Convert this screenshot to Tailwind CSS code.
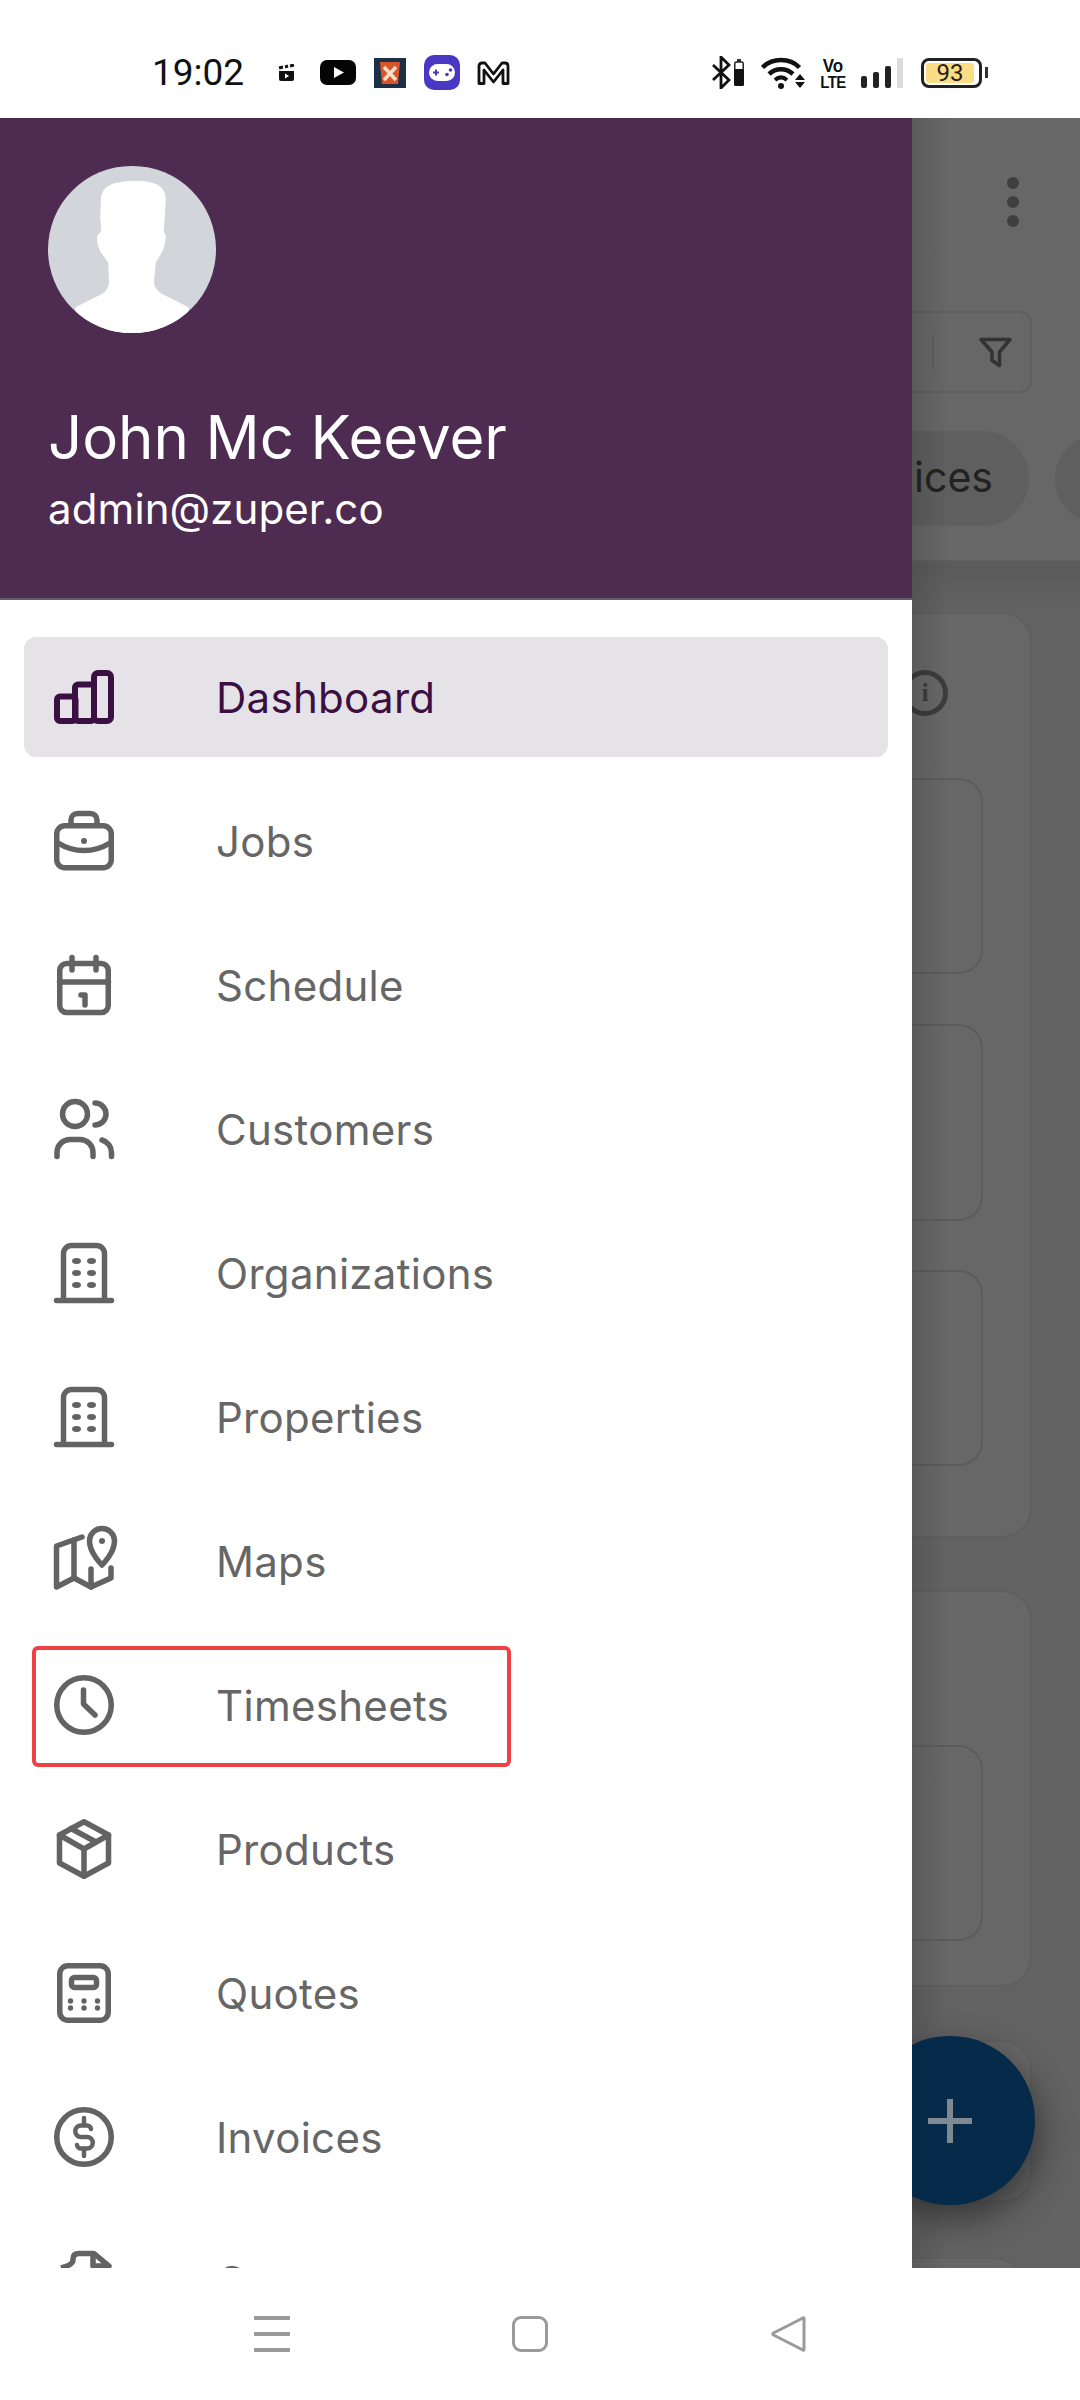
<!DOCTYPE html>
<html lang="en">
<head>
<meta charset="utf-8">
<title>Zuper drawer</title>
<script src="https://cdn.jsdelivr.net/npm/@tailwindcss/browser@4"></script>
</head>
<body class="m-0 bg-white">
<div class="w-[1080px] h-[2400px] flex flex-col overflow-hidden bg-white font-['Inter','Liberation_Sans',sans-serif]">

  <!-- status bar -->
  <div class="h-[118px] shrink-0 bg-white flex items-center justify-between pl-[152px] pr-[92px] pt-[27px] text-[#111]">
    <div class="flex items-center">
      <span class="font-['Roboto',sans-serif] text-[37px] leading-[36px] w-[126px]">19:02</span>
      <svg class="w-[17px] h-[17px]" viewBox="0 0 17 17"><path d="M1 7h15v8a2 2 0 0 1-2 2H3a2 2 0 0 1-2-2z" fill="#111"/><path d="M1 4l4-1M7 3l3-1M12 2l4-1" stroke="#111" stroke-width="3"/><path d="M7 9.500l4 2.500-4 2.500z" fill="#fff"/></svg>
      <svg class="w-[36px] h-[25px] ml-[25px]" viewBox="0 0 36 25"><rect width="36" height="25" rx="7" fill="#050505"/><path d="M14 7l10 5.500L14 18z" fill="#fff"/></svg>
      <svg class="w-[32px] h-[30px] ml-[18px]" viewBox="0 0 32 30"><rect width="32" height="30" fill="#1c3145"/><path d="M6 4h20l-2 22H8z" fill="#d9552b"/><path d="M10 9l12 13M22 9L10 22" stroke="#fbe0c8" stroke-width="3.500"/></svg>
      <svg class="w-[36px] h-[35px] ml-[18px]" viewBox="0 0 36 35"><rect width="36" height="35" rx="10" fill="#4a37c4"/><rect x="5" y="9" width="26" height="17" rx="8.500" fill="#fff"/><path d="M9 17.500h6M12 14.500v6" stroke="#4a37c4" stroke-width="2"/><circle cx="23" cy="19.500" r="1.800" fill="#4a37c4"/><circle cx="26.500" cy="15" r="1.800" fill="#4a37c4"/></svg>
      <svg class="w-[33px] h-[24px] ml-[17px]" viewBox="0 0 33 24" fill="none"><path d="M2 22.500V5q0-3 3-3h3l8.500 11L25 2h3q3 0 3 3v17.500h-5V9l-9.500 12L7 9v13.500z" stroke="#111" stroke-width="2.800" stroke-linejoin="round"/></svg>
    </div>
    <div class="flex items-center">
      <svg class="w-[19px] h-[33px]" viewBox="0 0 19 33" fill="none"><path d="M1 9l16 15-8 8V1l8 8L1 24" stroke="#111" stroke-width="2.800"/></svg>
      <svg class="w-[10px] h-[27px] ml-[3px]" viewBox="0 0 10 27"><rect x="3" y="0" width="4" height="3" fill="#333"/><rect x=".8" y="3" width="8.400" height="23" rx="1.500" fill="#fff" stroke="#222" stroke-width="1.500"/><rect y="10" width="10" height="17" rx="1.500" fill="#111"/></svg>
      <svg class="w-[46px] h-[32px] ml-[17px]" viewBox="0 0 46 32" fill="none"><path d="M1.500 10.500C11 .5 29 .5 38.500 10.500" stroke="#111" stroke-width="4.500"/><path d="M8 17c7-6.500 17-6.500 24 0" stroke="#111" stroke-width="4.500"/><path d="M14 23c4-3.500 8-3.500 12 0" stroke="#111" stroke-width="4"/><circle cx="20" cy="29" r="3" fill="#111"/><path d="M39 17l-5 6h10zM34 25h10l-5 6z" fill="#111"/></svg>
      <div class="ml-[15px] w-[22px] flex flex-col items-center font-['Liberation_Sans',sans-serif] font-bold text-[#111] leading-none">
        <span class="text-[17px] h-[17px] [transform:scaleY(1.1)]">Vo</span>
        <span class="text-[15px] h-[15px] tracking-[-0.5px] [transform:scaleY(1.1)]">LTE</span>
      </div>
      <div class="ml-[17px] h-[30px] flex items-end gap-[6px]">
        <div class="w-[6px] h-[12px] rounded-[2px] bg-[#222]"></div>
        <div class="w-[6px] h-[16px] rounded-[2px] bg-[#222]"></div>
        <div class="w-[6px] h-[22px] rounded-[2px] bg-[#222]"></div>
        <div class="w-[6px] h-[30px] bg-[#dcdcdc]"></div>
      </div>
      <div class="ml-[18px] flex items-center">
        <div class="w-[61px] h-[30px] rounded-[8px] border-[3px] border-[#222] p-[2px] flex">
          <div class="w-[48px] h-full rounded-[3px] bg-[#fbdd85] flex items-center justify-center text-[24px] leading-none text-[#222] font-['Roboto',sans-serif]">93</div>
        </div>
        <div class="w-[3px] h-[11px] ml-[3px] bg-[#333]"></div>
      </div>
    </div>
  </div>

  <!-- middle -->
  <div class="relative h-[2150px] shrink-0 flex overflow-hidden">
    <!-- drawer -->
    <div class="w-[912px] h-full shrink-0 bg-white flex flex-col overflow-hidden">
      <div class="h-[482px] shrink-0 bg-[#4e2b50] pl-[48px] pt-[48px] text-white border-b-[2px] border-[#5f5f66]">
        <div class="w-[168px] h-[167px] rounded-full overflow-hidden bg-[#d2d6da]">
          <svg class="w-full h-full" viewBox="0 0 168 168"><path d="M53 30Q56 18 73 16Q92 13 105 17Q117 20 118 33L117 51L116 66L118 71Q117 82 114 87L108 97L106 117Q107 124 113 128L141 142V168H27V142L55 128Q60 124 61 117L60 97L52 86Q48 78 49 70L53 66L52 51Z" fill="#fff"/></svg>
        </div>
        <div class="mt-[69px] text-[60px] leading-[70px] tracking-[-0.1px]">John Mc Keever</div>
        <div class="mt-[12px] text-[42px] leading-[50px] tracking-[0.1px]">admin@zuper.co</div>
      </div>

      <div class="px-[24px] pt-[37px] flex flex-col gap-[24px] text-[42px] tracking-[0.3px] text-[#666666]">
        <div class="h-[120px] shrink-0 rounded-[12px] bg-[#e6e3e8] pl-[30px] flex items-center gap-[102px] text-[#3c0f42]">
          <svg class="w-[60px] h-[60px] shrink-0 overflow-visible" viewBox="0 0 60 60" fill="none" stroke="#3c0f42" stroke-width="6" stroke-linejoin="round"><rect x="3" y="29.500" width="18.500" height="24.500" rx="3"/><rect x="21" y="17.500" width="19" height="36.500" rx="3"/><rect x="40" y="6" width="17" height="48" rx="4"/></svg>
          <span>Dashboard</span>
        </div>
        <div class="h-[120px] shrink-0 pl-[30px] flex items-center gap-[102px]">
          <svg class="w-[60px] h-[60px] shrink-0 overflow-visible" viewBox="0 0 60 60" fill="none" stroke="#636363" stroke-width="5.500" stroke-linecap="round"><rect x="2.750" y="14.750" width="54.500" height="42" rx="8"/><path d="M17 13V9a6.500 6.500 0 0 1 6.500-6.500h13A6.500 6.500 0 0 1 43 9v4"/><path d="M4 32C20 42 40 42 56 32"/><circle cx="30" cy="30" r="3" fill="#636363" stroke="none"/></svg>
          <span>Jobs</span>
        </div>
        <div class="h-[120px] shrink-0 pl-[30px] flex items-center gap-[102px]">
          <svg class="w-[60px] h-[60px] shrink-0 overflow-visible" viewBox="0 0 60 60" fill="none" stroke="#636363" stroke-width="5.500" stroke-linecap="round" stroke-linejoin="round"><rect x="5.750" y="8.500" width="48.500" height="49" rx="7"/><path d="M18 2.500V15M42 2.500V15M5.500 27H54.500"/><path d="M27 40h4v10"/></svg>
          <span>Schedule</span>
        </div>
        <div class="h-[120px] shrink-0 pl-[30px] flex items-center gap-[102px]">
          <svg class="w-[60px] h-[60px] shrink-0 overflow-visible" viewBox="0 0 60 60" fill="none" stroke="#636363" stroke-width="5.500" stroke-linecap="round"><circle cx="21" cy="15" r="12.500"/><path d="M41 4a11 11 0 0 1 0 22"/><path d="M3 57.500v-4a13 13 0 0 1 13-13h10a13 13 0 0 1 13 13v4"/><path d="M48 41a13 13 0 0 1 9.500 12.500v4"/></svg>
          <span>Customers</span>
        </div>
        <div class="h-[120px] shrink-0 pl-[30px] flex items-center gap-[102px]">
          <svg class="w-[60px] h-[60px] shrink-0 overflow-visible" viewBox="0 0 60 60" fill="none" stroke="#636363" stroke-width="5.500" stroke-linecap="round"><path d="M9.500 57V10.500a8 8 0 0 1 8-8h25a8 8 0 0 1 8 8V57"/><path d="M2.500 57.500h55"/><g fill="#636363" stroke="none"><ellipse cx="22.500" cy="18" rx="4.500" ry="3"/><ellipse cx="37.500" cy="18" rx="4.500" ry="3"/><ellipse cx="22.500" cy="30" rx="4.500" ry="3"/><ellipse cx="37.500" cy="30" rx="4.500" ry="3"/><ellipse cx="22.500" cy="42" rx="4.500" ry="3"/><ellipse cx="37.500" cy="42" rx="4.500" ry="3"/></g></svg>
          <span>Organizations</span>
        </div>
        <div class="h-[120px] shrink-0 pl-[30px] flex items-center gap-[102px]">
          <svg class="w-[60px] h-[60px] shrink-0 overflow-visible" viewBox="0 0 60 60" fill="none" stroke="#636363" stroke-width="5.500" stroke-linecap="round"><path d="M9.500 57V10.500a8 8 0 0 1 8-8h25a8 8 0 0 1 8 8V57"/><path d="M2.500 57.500h55"/><g fill="#636363" stroke="none"><ellipse cx="22.500" cy="18" rx="4.500" ry="3"/><ellipse cx="37.500" cy="18" rx="4.500" ry="3"/><ellipse cx="22.500" cy="30" rx="4.500" ry="3"/><ellipse cx="37.500" cy="30" rx="4.500" ry="3"/><ellipse cx="22.500" cy="42" rx="4.500" ry="3"/><ellipse cx="37.500" cy="42" rx="4.500" ry="3"/></g></svg>
          <span>Properties</span>
        </div>
        <div class="h-[120px] shrink-0 pl-[30px] flex items-center gap-[102px]">
          <svg class="w-[60px] h-[60px] shrink-0 overflow-visible" viewBox="0 0 60 60" fill="none" stroke="#636363" stroke-width="5.500" stroke-linecap="round" stroke-linejoin="round"><path d="M28 6L2.500 15V56L20 47L37 56L57 47V37"/><path d="M20 9V47M37 38V56"/><path d="M48 34C48 34 35.500 22 35.500 10a12.500 12.500 0 0 1 25 0C60.500 22 48 34 48 34Z"/><circle cx="48" cy="10" r="3" fill="#636363" stroke="none"/></svg>
          <span>Maps</span>
        </div>
        <div class="relative h-[120px] shrink-0 pl-[30px] flex items-center gap-[102px]">
          <svg class="w-[60px] h-[60px] shrink-0 overflow-visible" viewBox="0 0 60 60" fill="none" stroke="#636363" stroke-width="5.500" stroke-linecap="round" stroke-linejoin="round"><circle cx="30" cy="30" r="27.250"/><path d="M29.500 15V29L41 40"/></svg>
          <span>Timesheets</span>
          <div class="absolute left-[8px] top-[1px] w-[479px] h-[121px] rounded-[6px] border-[4px] border-[#f04044]"></div>
        </div>
        <div class="h-[120px] shrink-0 pl-[30px] flex items-center gap-[102px]">
          <svg class="w-[60px] h-[60px] shrink-0 overflow-visible" viewBox="0 0 60 60" fill="none" stroke="#636363" stroke-width="5.500" stroke-linecap="round" stroke-linejoin="round"><path d="M30 2.750L54.500 16V44L30 57.250L5.500 44V16Z"/><path d="M5.500 16L30 30L54.500 16M30 30V57M17 9.500L42 23"/></svg>
          <span>Products</span>
        </div>
        <div class="h-[120px] shrink-0 pl-[30px] flex items-center gap-[102px]">
          <svg class="w-[60px] h-[60px] shrink-0 overflow-visible" viewBox="0 0 60 60" fill="none" stroke="#636363" stroke-width="5.500"><rect x="5.750" y="2.750" width="48.500" height="54.500" rx="8"/><rect x="17.500" y="14.500" width="25" height="10" rx="3"/><g fill="#636363" stroke="none"><circle cx="16.500" cy="38" r="2.700"/><circle cx="30" cy="38" r="2.700"/><circle cx="43.500" cy="38" r="2.700"/><circle cx="16.500" cy="45" r="2.700"/><circle cx="30" cy="45" r="2.700"/><circle cx="43.500" cy="45" r="2.700"/></g></svg>
          <span>Quotes</span>
        </div>
        <div class="h-[120px] shrink-0 pl-[30px] flex items-center gap-[102px]">
          <svg class="w-[60px] h-[60px] shrink-0 overflow-visible" viewBox="0 0 60 60" fill="none" stroke="#636363" stroke-width="5.500" stroke-linecap="round"><circle cx="30" cy="30" r="27.250"/><path d="M37 22a4 4 0 0 0-4-3.500h-6a5.750 5.750 0 0 0 0 11.500h6a5.750 5.750 0 0 1 0 11.500h-6a4 4 0 0 1-4-3.500" stroke-width="4.500"/><path d="M30 11v7M30 42v7" stroke-width="4.500"/></svg>
          <span>Invoices</span>
        </div>
        <div class="h-[120px] shrink-0 pl-[30px] flex items-center gap-[102px]">
          <svg class="w-[60px] h-[60px] shrink-0 overflow-visible" viewBox="0 0 60 60" fill="none" stroke="#636363" stroke-width="5.500" stroke-linejoin="round"><path d="M7 17Q19 14 19 9V8Q19 2.500 25 2.500H40L55 15H39V3"/></svg>
          <span>Contracts</span>
        </div>
      </div>
    </div>

    <!-- dimmed page behind the drawer -->
    <div class="relative w-[168px] h-full shrink-0 overflow-hidden bg-[#626262]">
      <div class="h-[444px] bg-[#676767] border-b-[2px] border-[#5e5e5e]">
        <div class="h-[193px] flex flex-col items-end pr-[61px] pt-[59px] gap-[7px]">
          <div class="w-[12px] h-[12px] rounded-full bg-[#3f3f3f]"></div>
          <div class="w-[12px] h-[12px] rounded-full bg-[#3f3f3f]"></div>
          <div class="w-[12px] h-[12px] rounded-full bg-[#3f3f3f]"></div>
        </div>
        <div class="w-[120px] h-[82px] rounded-r-[12px] border-y-2 border-r-2 border-[#5f5f5f] flex items-center justify-between pl-[20px] pr-[18px]">
          <div class="w-[2px] h-[34px] bg-[#5e5e5e]"></div>
          <svg class="w-[33px] h-[31px]" viewBox="0 0 33 31" fill="none"><path d="M2 2.500H31L20.500 15V28.500L13 23.500V15Z" stroke="#333" stroke-width="3.500" stroke-linejoin="round"/></svg>
        </div>
        <div class="mt-[38px] flex items-start">
          <div class="w-[117px] h-[95px] shrink-0 rounded-r-[47px] bg-[#5f5f5f] flex items-center justify-end pr-[36px] text-[41px] text-[#222]"><span class="-mt-[2px]">ices</span></div>
          <div class="w-[60px] h-[90px] shrink-0 ml-[26px] mt-[3px] rounded-l-[45px] bg-[#5f5f5f]"></div>
        </div>
      </div>

      <div class="h-[1706px] flex flex-col">
        <div class="h-[50px] shrink-0 bg-linear-to-b from-black/8 to-transparent"></div>
        <div class="w-[120px] h-[926px] shrink-0 rounded-r-[30px] border-y-2 border-r-2 border-[#5f5f5f] bg-[#676767] overflow-hidden">
          <div class="h-[164px] relative">
            <div class="absolute left-[-10px] top-[56px] w-[46px] h-[46px] rounded-full border-[5px] border-[#3c3c3c] flex items-center justify-center text-[26px] leading-none font-bold text-[#3c3c3c] font-['Liberation_Serif',serif]">i</div>
          </div>
          <div class="w-[71px] h-[196px] rounded-r-[24px] border-y-2 border-r-2 border-[#5c5c5c]"></div>
          <div class="w-[71px] h-[197px] mt-[50px] rounded-r-[24px] border-y-2 border-r-2 border-[#5c5c5c]"></div>
          <div class="w-[71px] h-[196px] mt-[49px] rounded-r-[24px] border-y-2 border-r-2 border-[#5c5c5c]"></div>
        </div>
        <div class="h-[52px] shrink-0"></div>
        <div class="w-[120px] h-[397px] shrink-0 rounded-r-[30px] border-y-2 border-r-2 border-[#5f5f5f] bg-[#676767] overflow-hidden pt-[153px]">
          <div class="w-[71px] h-[196px] rounded-r-[24px] border-y-2 border-r-2 border-[#5c5c5c]"></div>
        </div>
        <div class="h-[53px] shrink-0"></div>
        <div class="w-[120px] h-[163px] shrink-0 rounded-r-[30px] border-y-2 border-r-2 border-[#5f5f5f] bg-[#676767]"></div>
        <div class="h-[54px] shrink-0"></div>
        <div class="w-[112px] h-[60px] shrink-0 rounded-r-[30px] border-t-2 border-r-2 border-[#5f5f5f] bg-[#676767]"></div>
      </div>

      <!-- drawer edge shadow -->
      <div class="absolute left-0 top-0 w-[36px] h-full bg-linear-to-r from-black/12 to-transparent"></div>
      <!-- floating button -->
      <div class="absolute left-[-47px] top-[1918px] w-[170px] h-[169px] rounded-full bg-[#062b4a] shadow-[4px_14px_34px_rgba(0,0,0,0.45)] flex items-center justify-center">
        <svg class="w-[44px] h-[44px]" viewBox="0 0 44 44"><path d="M22 0V44M0 22H44" stroke="#808890" stroke-width="6"/></svg>
      </div>
    </div>
  </div>

  <!-- navigation bar -->
  <div class="flex-1 bg-white flex items-start pt-[48px] pl-[254px]">
    <div class="w-[36px] h-[36px] flex flex-col justify-between">
      <div class="h-[4px] bg-[#9a9a9a]"></div>
      <div class="h-[4px] bg-[#9a9a9a]"></div>
      <div class="h-[4px] bg-[#9a9a9a]"></div>
    </div>
    <div class="w-[36px] h-[36px] ml-[222px] rounded-[9px] border-[3px] border-[#9a9a9a]"></div>
    <svg class="w-[35px] h-[36px] ml-[223px]" viewBox="0 0 35 36" fill="none"><path d="M33 2.500V33.500Q33 35 31 33.500L2.500 19Q1 18 2.500 17L31 2.500Q33 1 33 2.500Z" stroke="#9a9a9a" stroke-width="3" stroke-linejoin="round"/></svg>
  </div>
</div>
</body>
</html>
